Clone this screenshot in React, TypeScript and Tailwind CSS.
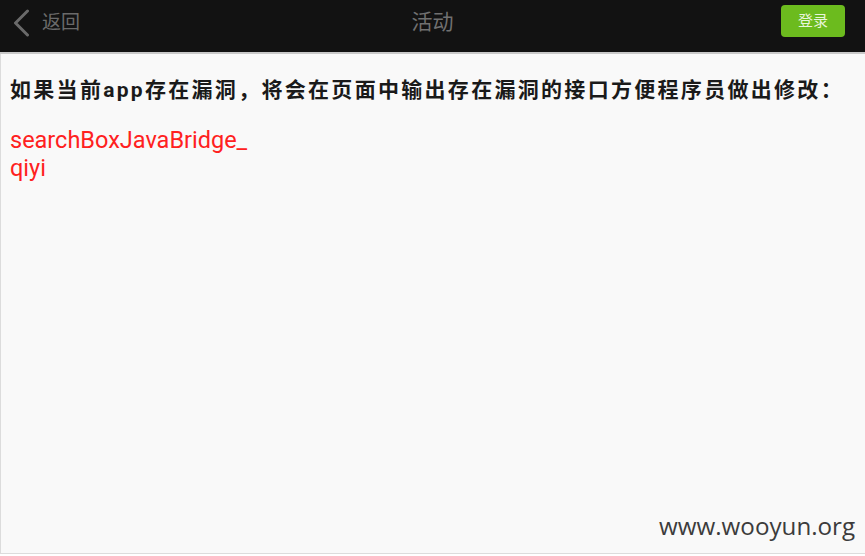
const font = "font-['Roboto','Noto_Sans_CJK_SC',sans-serif]"

export default function App() {
  return (
    <div className={`relative w-[865px] h-[556px] overflow-hidden bg-white ${font}`}>
      {/* top bar */}
      <div className="flex h-[52px] items-center justify-between bg-[#121212] pb-[6px] pl-[12px] pr-[12px]">
        <div className="flex w-[120px] items-center gap-[12px]">
          <svg width="18" height="28" viewBox="0 0 18 28" fill="none">
            <path d="M15.5 2 L3.5 14 L15.5 26" stroke="#6a6a6a" strokeWidth="3" strokeLinecap="round" strokeLinejoin="round" />
          </svg>
          <span className="text-[19px] text-[#6a6a6a]">返回</span>
        </div>
        <span className="text-[21px] text-[#707070]">活动</span>
        <div className="flex w-[120px] justify-end pr-[8px]">
          <button className="-mt-[4px] h-[32px] w-[64px] rounded-[4px] bg-[#6cbb1e] text-[15px] text-[#e8f5da]">登录</button>
        </div>
      </div>
      <div className="h-[2px] bg-[#c9c9c9]" />

      {/* content */}
      <div className="h-[500px] border-l border-b border-[#dcdcdc] bg-[#f9f9f9] pl-[9px] pr-[10px] pt-[21px]">
        <p className="text-[21px] font-bold tracking-[2.3px] text-[#1a1a1a]">
          如果当前app存在漏洞，将会在页面中输出存在漏洞的接口方便程序员做出修改：
        </p>
        <div className="mt-[19px] text-[23.5px] leading-[28px] text-[#ff2020]">
          <div>searchBoxJavaBridge_</div>
          <div>qiyi</div>
        </div>
      </div>

      {/* watermark */}
      <span className="absolute left-[659px] top-[508px] font-['Open_Sans',sans-serif] text-[24.2px] text-[#3c3c3c]">
        www.wooyun.org
      </span>
    </div>
  )
}
